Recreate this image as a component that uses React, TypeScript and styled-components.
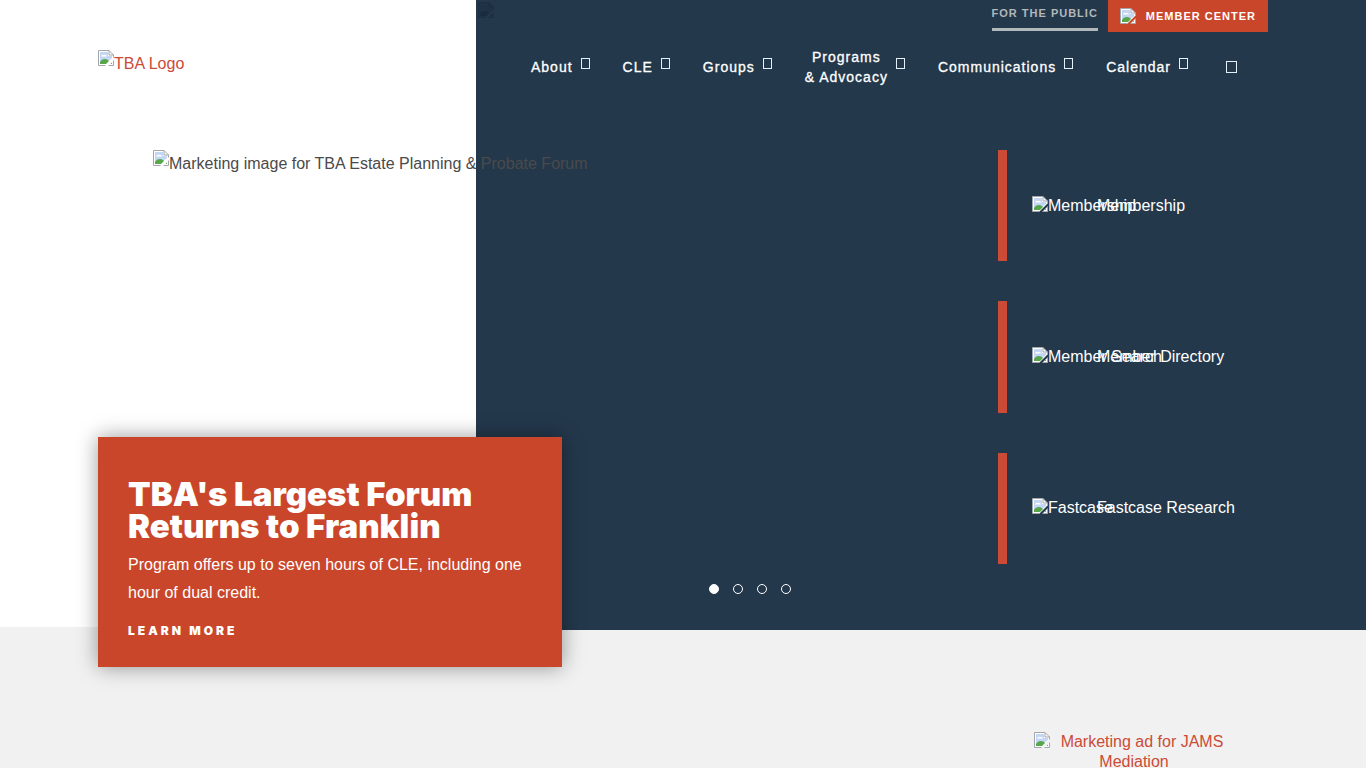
import React from "react";
import styled, { createGlobalStyle } from "styled-components";

const navy = "#24384c";
const red = "#ca462a";

const GlobalStyle = createGlobalStyle`
  * { box-sizing: border-box; }
  body {
    margin: 0;
    background: #f1f1f1;
    color: #4a4a4a;
    font-family: "Liberation Sans", Arial, sans-serif;
    font-size: 16px;
    line-height: 20px;
    overflow-x: hidden;
  }
  h2, p, ul { margin: 0; padding: 0; }
  ul { list-style: none; }
  a { color: inherit; text-decoration: none; }
  button { font: inherit; color: inherit; background: none; border: 0; padding: 0; cursor: pointer; }
`;

const Hero = styled.div`
  position: relative;
  background:
    linear-gradient(to right, transparent calc(50% - 207px), ${navy} 0),
    linear-gradient(#fff, #fff) 0 0 / 100% calc(100% - 3px) no-repeat;
`;

const Container = styled.div`
  max-width: 1170px;
  margin: 0 auto;
`;

const Header = styled(Container).attrs({ as: "header" })`
  display: flex;
  justify-content: space-between;
  min-height: 150px;
`;

const LogoLink = styled.a`
  display: block;
  padding-top: 50px;
  color: #cc4b37;
`;

const HeroMark = styled.div`
  position: absolute;
  top: 2px;
  left: calc(50% - 205px);
  opacity: 0.8;
`;

const HeaderMenus = styled.div`
  display: flex;
  flex-direction: column;
  align-items: flex-end;
  gap: 15px;
`;

const TopBar = styled.div`
  display: flex;
  align-items: flex-start;
  gap: 10px;
  font-size: 11px;
  font-weight: bold;
  letter-spacing: 1px;
  text-transform: uppercase;
`;

const PublicLink = styled.a`
  padding-top: 3px;
  height: 31px;
  border-bottom: 3px solid #b2b7ba;
  color: #b2b7ba;
`;

const MemberLink = styled.a`
  display: flex;
  align-items: center;
  gap: 10px;
  height: 32px;
  padding: 0 12px;
  background: ${red};
  color: #fff;
`;

const Nav = styled.nav`
  display: flex;
  align-items: center;
  gap: 33px;
  padding-right: 31px;
  color: #fff;
  font-size: 14px;
  letter-spacing: 1px;
  text-align: center;
  -webkit-text-stroke: 0.3px #fff;
`;

const NavItem = styled.div`
  display: flex;
  align-items: center;
  gap: 8px;
`;

const Toggle = styled.button`
  width: 9px;
  height: 11px;
  margin-bottom: 8px;
  border: 1px solid #e4f0fa;
`;

const SearchToggle = styled.button`
  width: 11px;
  height: 12px;
  margin-left: 5px;
  border: 1px solid #e4f0fa;
`;

const HeroBody = styled(Container).attrs({ as: "main" })`
  display: grid;
  grid-template-columns: 464px 1fr 270px;
  min-height: 480px;
`;

const Slide = styled.section`
  display: flex;
  flex-direction: column;
  justify-content: space-between;
  margin-bottom: -37px;
`;

const SlideImage = styled.div`
  padding-left: 55px;
`;

const AltBox = styled.span`
  display: flex;
  align-items: flex-start;
  white-space: nowrap;
`;

const AltText = styled.span<{ $drop: number }>`
  padding-top: ${(p) => p.$drop}px;
`;

const Card = styled.article`
  position: relative;
  padding: 41px 30px 26px;
  background: ${red};
  color: #fff;
  box-shadow: 0 0 20px rgba(0, 0, 0, 0.4);
`;

const CardTitle = styled.h2`
  font-family: "Arial Black", Inter, sans-serif;
  font-size: 33px;
  font-weight: 900;
  line-height: 32px;
  white-space: nowrap;
`;

const CardText = styled.p`
  margin: 9px 0 14px;
  line-height: 28px;
`;

const LearnMore = styled.a`
  display: block;
  font-family: "Arial Black", Inter, sans-serif;
  font-size: 12px;
  font-weight: 900;
  letter-spacing: 3px;
  text-transform: uppercase;
`;

const Dots = styled.div`
  display: flex;
  align-self: end;
  justify-content: center;
  gap: 14px;
  margin: 0 60px 36px 0;
`;

const Dot = styled.button<{ $active?: boolean }>`
  width: 10px;
  height: 10px;
  border: 1px solid #fff;
  border-radius: 50%;
  background: ${(p) => (p.$active ? "#fff" : "transparent")};
`;

const QuickLinks = styled.ul`
  display: grid;
  grid-template-rows: repeat(3, 1fr);
  gap: 40px;
  height: 414px;
`;

const QuickLink = styled.a`
  display: flex;
  align-items: center;
  height: 100%;
  padding-left: 25px;
  border-left: 9px solid #cc4b37;
  color: #fff;
  white-space: nowrap;
`;

const QuickIcon = styled.span`
  width: 65px;
`;

const Promo = styled(Container)`
  display: flex;
  justify-content: flex-end;
  padding: 102px 34px 40px 0;
`;

const PromoLink = styled.a`
  display: block;
  width: 200px;
  color: #cc4b37;
  text-align: center;

  svg { float: left; }
`;

function BrokenImage({ dim = false }: { dim?: boolean }) {
  const edge = dim ? "#1b2d3f" : "#a2a6aa";
  const paper = dim ? "#1f3145" : "#fff";
  const grass = dim ? "#172a3b" : "#57a64a";
  return (
    <svg width="16" height="16" viewBox="0 0 16 16" style={{ flex: "none" }} aria-hidden="true">
      <path d="M0.5 0.5H11L15.5 5V7.5L7.5 15.5H0.5Z" fill={paper} />
      <path d="M2 2H10V6H14V8L9 12H2Z" fill={dim ? "#1f3145" : "#c3d6f5"} />
      <path d="M3 6.5a2 2 0 0 1 3-1.5 2 2 0 0 1 3 1.5Z" fill={paper} />
      <path d="M2 14V12Q3.5 9 7 9Q9.500 9 11 11L8 14Z" fill={grass} />
      <path d="M15.500 10.500V15.500H10.500Z" fill={paper} />
      <path d="M14 12.500V14H12.500Z" fill={grass} />
      <path
        d="M7.500 15.500H0.500V0.500H11L15.500 5V7.500M11 0.500V5H15.500M15.500 10.500V15.500H10.500"
        fill="none"
        stroke={edge}
      />
    </svg>
  );
}

function ImageAlt({ text, drop = 4 }: { text: string; drop?: number }) {
  return (
    <AltBox>
      <BrokenImage />
      <AltText $drop={drop}>{text}</AltText>
    </AltBox>
  );
}

const menu: React.ReactNode[] = [
  "About",
  "CLE",
  "Groups",
  <>Programs<br />&amp; Advocacy</>,
  "Communications",
  "Calendar",
];

const quickLinks = [
  { alt: "Membership", label: "Membership" },
  { alt: "Member Search", label: "Member Directory" },
  { alt: "Fastcase", label: "Fastcase Research" },
];

export default function App() {
  return (
    <>
      <GlobalStyle />
      <Hero>
        <HeroMark><BrokenImage dim /></HeroMark>
        <Header>
          <LogoLink href="#"><ImageAlt text="TBA Logo" /></LogoLink>
          <HeaderMenus>
            <TopBar>
              <PublicLink href="#">For the Public</PublicLink>
              <MemberLink href="#"><BrokenImage />Member Center</MemberLink>
            </TopBar>
            <Nav>
              {menu.map((label, i) => (
                <NavItem key={i}>
                  <a href="#">{label}</a>
                  <Toggle aria-label="Open submenu" />
                </NavItem>
              ))}
              <SearchToggle aria-label="Search" />
            </Nav>
          </HeaderMenus>
        </Header>
        <HeroBody>
          <Slide>
            <SlideImage>
              <ImageAlt text="Marketing image for TBA Estate Planning & Probate Forum" />
            </SlideImage>
            <Card>
              <CardTitle>TBA's Largest Forum<br />Returns to Franklin</CardTitle>
              <CardText>
                Program offers up to seven hours of CLE, including one hour of dual credit.
              </CardText>
              <LearnMore href="#">Learn More</LearnMore>
            </Card>
          </Slide>
          <Dots>
            {[0, 1, 2, 3].map((n) => (
              <Dot key={n} $active={n === 0} aria-label={`Slide ${n + 1}`} />
            ))}
          </Dots>
          <QuickLinks>
            {quickLinks.map((link) => (
              <li key={link.label}>
                <QuickLink href="#">
                  <QuickIcon><ImageAlt text={link.alt} drop={0} /></QuickIcon>
                  <span>{link.label}</span>
                </QuickLink>
              </li>
            ))}
          </QuickLinks>
        </HeroBody>
      </Hero>
      <Promo>
        <PromoLink href="#">
          <BrokenImage />
          Marketing ad for JAMS Mediation
        </PromoLink>
      </Promo>
    </>
  );
}
